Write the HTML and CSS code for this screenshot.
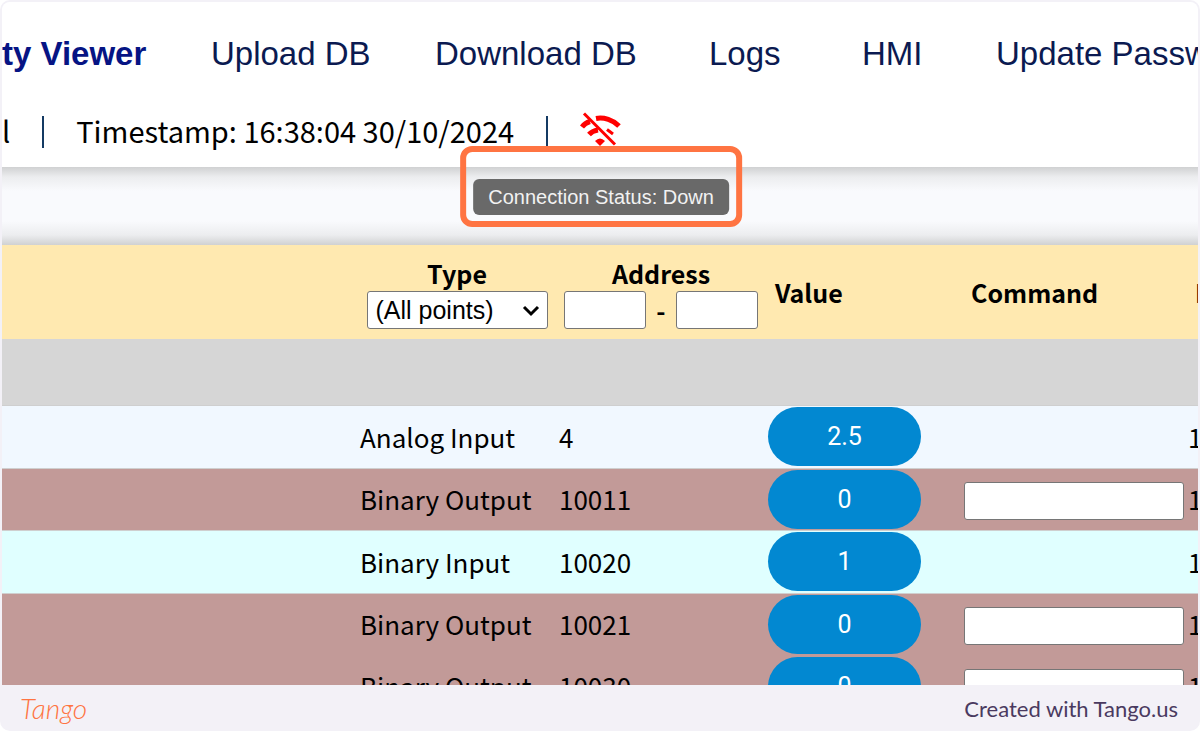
FILE: index.html
```html
<!DOCTYPE html>
<html lang="en">
<head>
<meta charset="utf-8">
<title>Connectivity Viewer</title>
<link rel="stylesheet" href="styles.css">
</head>
<body>
<div class="frame">
  <main class="screen">
    <header class="header">
      <nav class="nav">
        <a class="nav-link active" href="#viewer">ty Viewer</a>
        <a class="nav-link" href="#upload">Upload DB</a>
        <a class="nav-link" href="#download">Download DB</a>
        <a class="nav-link" href="#logs">Logs</a>
        <a class="nav-link" href="#hmi">HMI</a>
        <a class="nav-link" href="#password">Update Passw</a>
      </nav>
      <div class="status">
        <span>l</span>
        <span class="divider"></span>
        <span class="timestamp">Timestamp: 16:38:04 30/10/2024</span>
        <span class="divider"></span>
        <span class="connection">
          <svg class="wifi" viewBox="0 0 42 34" role="img" aria-label="Connection down">
            <g fill="none" stroke="#f00">
              <path d="M2 15Q5 11 10 9.500M16 6.500C24 5 33 8 39 14" stroke-width="5"/>
              <path d="M9 22.500Q12 19 18 18" stroke-width="5"/>
              <path d="M27 17.500L33 22" stroke-width="3"/>
              <path d="M4 1.500L35 32.500" stroke-width="3"/>
            </g>
            <path d="M15 29Q20 24 25 29L20 34Z" fill="#f00"/>
          </svg>
          <span class="highlight"><span class="tooltip" role="tooltip">Connection Status: Down</span></span>
        </span>
      </div>
    </header>
    <section class="points">
      <table class="table">
        <colgroup>
          <col class="c-name"><col class="c-type"><col class="c-address"><col class="c-value"><col class="c-command"><col>
        </colgroup>
        <thead>
          <tr>
            <th></th>
            <th>
              <label class="th-label" for="type">Type</label>
              <span class="select-box">
                <select id="type" class="select"><option>(All points)</option></select>
                <svg class="chevron" viewBox="0 0 18 12" aria-hidden="true"><path d="M2 2L9 9L16 2" fill="none" stroke="#000" stroke-width="3"/></svg>
              </span>
            </th>
            <th>
              <label class="th-label" for="from">Address</label>
              <span class="range">
                <input id="from" class="field" type="text">
                <span>-</span>
                <input class="field" type="text" aria-label="Address to">
              </span>
            </th>
            <th class="left">Value</th>
            <th class="left">Command</th>
            <th class="left">I</th>
          </tr>
        </thead>
        <tbody>
          <tr class="spacer"><td colspan="6"></td></tr>
          <tr class="analog"><td></td><td>Analog Input</td><td>4</td><td><button class="pill">2.5</button></td><td></td><td>1</td></tr>
          <tr class="output"><td></td><td>Binary Output</td><td>10011</td><td><button class="pill">0</button></td><td><input class="field command" type="text" aria-label="Command 10011"></td><td>1</td></tr>
          <tr class="input"><td></td><td>Binary Input</td><td>10020</td><td><button class="pill">1</button></td><td></td><td>1</td></tr>
          <tr class="output"><td></td><td>Binary Output</td><td>10021</td><td><button class="pill">0</button></td><td><input class="field command" type="text" aria-label="Command 10021"></td><td>1</td></tr>
          <tr class="output"><td></td><td>Binary Output</td><td>10030</td><td><button class="pill">0</button></td><td><input class="field command" type="text" aria-label="Command 10030"></td><td>1</td></tr>
        </tbody>
      </table>
    </section>
  </main>
  <footer class="footer">
    <span class="logo">Tango</span>
    <span>Created with Tango.us</span>
  </footer>
</div>
</body>
</html>
```
FILE: styles.css
```css
* { box-sizing: border-box; }
body { margin: 0; background: #fff; font-family: "Noto Sans CJK SC", "Noto Sans", sans-serif; color: #000; }
.frame { display: flex; flex-direction: column; height: 100vh; padding: 2px 2px 0; border-radius: 10px; background: #f3f1f7; overflow: hidden; }
.screen { flex: 1; min-height: 0; overflow: hidden; border-radius: 8px 8px 0 0; background: #f9fafd; }
.header { position: relative; z-index: 1; padding: 29px 0 14px; background: #fff; }
.nav { display: grid; grid-template-columns: 209px 224px 274px 153px 134px auto; height: 46px; align-items: center; font: 33px "Liberation Sans", Arial, sans-serif; white-space: nowrap; }
.nav-link { color: #0b1a51; text-decoration: none; }
.nav-link.active { color: #061484; font-weight: bold; }
.status { display: flex; align-items: center; height: 42px; margin-top: 34px; font-size: 29px; line-height: 38px; white-space: nowrap; }
.status > span:first-child, .timestamp { height: 42px; }
.divider { width: 2px; height: 32px; margin: 0 32px; background: #143a63; }
.connection { position: relative; height: 40px; }
.wifi { display: block; width: 42px; height: 34px; }
.highlight { position: absolute; top: 34px; left: 50%; transform: translateX(-50%); padding: 27px 7px 6px; border: 6px solid #ff7442; border-radius: 12px; }
.tooltip { display: block; padding: 0 15px; border-radius: 6px; background: #696969; color: #f2f2f2; font: 20px/36px "Liberation Sans", Arial, sans-serif; }
.points::before { content: ""; display: block; height: 78px; background: linear-gradient(#d0d1d2, #ecedef 10px, #f9fafd 24px, #f9fafd 54px, #ecedef 68px, #d0d1d2); }
.table { width: 100%; table-layout: fixed; border-collapse: collapse; font-size: 26px; line-height: 38px; white-space: nowrap; }
.c-name { width: 356px; }
.c-type { width: 198px; }
.c-address { width: 210px; }
.c-value { width: 196px; }
.c-command { width: 224px; }
th, td { padding: 0; }
th { height: 94px; background: #ffe9b0; font-size: 25px; font-weight: bold; }
th.left { padding-left: 9px; text-align: left; }
.th-label { display: block; height: 36px; line-height: 36px; }
.range { display: flex; justify-content: center; align-items: center; gap: 10px; }
.field { width: 82px; height: 38px; padding: 0 8px; border: 1px solid #767676; border-radius: 3px; background: #fff; font: 25px "Liberation Sans", Arial, sans-serif; }
.select-box { position: relative; display: inline-block; width: 181px; height: 38px; vertical-align: top; }
.select { display: block; width: 100%; height: 38px; padding: 0 8px; appearance: none; border: 1px solid #767676; border-radius: 3px; background: #fff; color: #000; font: 25px "Liberation Sans", Arial, sans-serif; }
.chevron { position: absolute; top: 14px; right: 8px; width: 18px; height: 12px; pointer-events: none; }
tbody tr { height: 63px; border-bottom: 1px solid #cfcfcf; }
tbody tr.output { height: 62px; }
tbody tr.spacer { height: 66px; background: #d6d6d6; }
.analog { background: #f1f8ff; }
.output { background: #c29a98; }
.input { background: #e0ffff; }
tr.output:has(+ tr.output) { border-bottom-color: #c29a98; }
td:nth-child(n + 2) { padding-left: 2px; }
td:nth-child(3) { padding-left: 3px; }
.pill { display: block; width: 153px; height: 59px; padding: 0; border: 0; border-radius: 30px; background: #0288d1; color: #fff; font: 25px Roboto, sans-serif; }
.command { display: block; width: 220px; margin-top: 3px; }
.footer { display: flex; align-items: center; justify-content: space-between; height: 46px; padding: 0 20px 0 18px; color: #4a3a60; font: 22px Lato, sans-serif; }
.logo { color: #ff7442; font-size: 28px; font-style: italic; font-weight: 300; }
```
